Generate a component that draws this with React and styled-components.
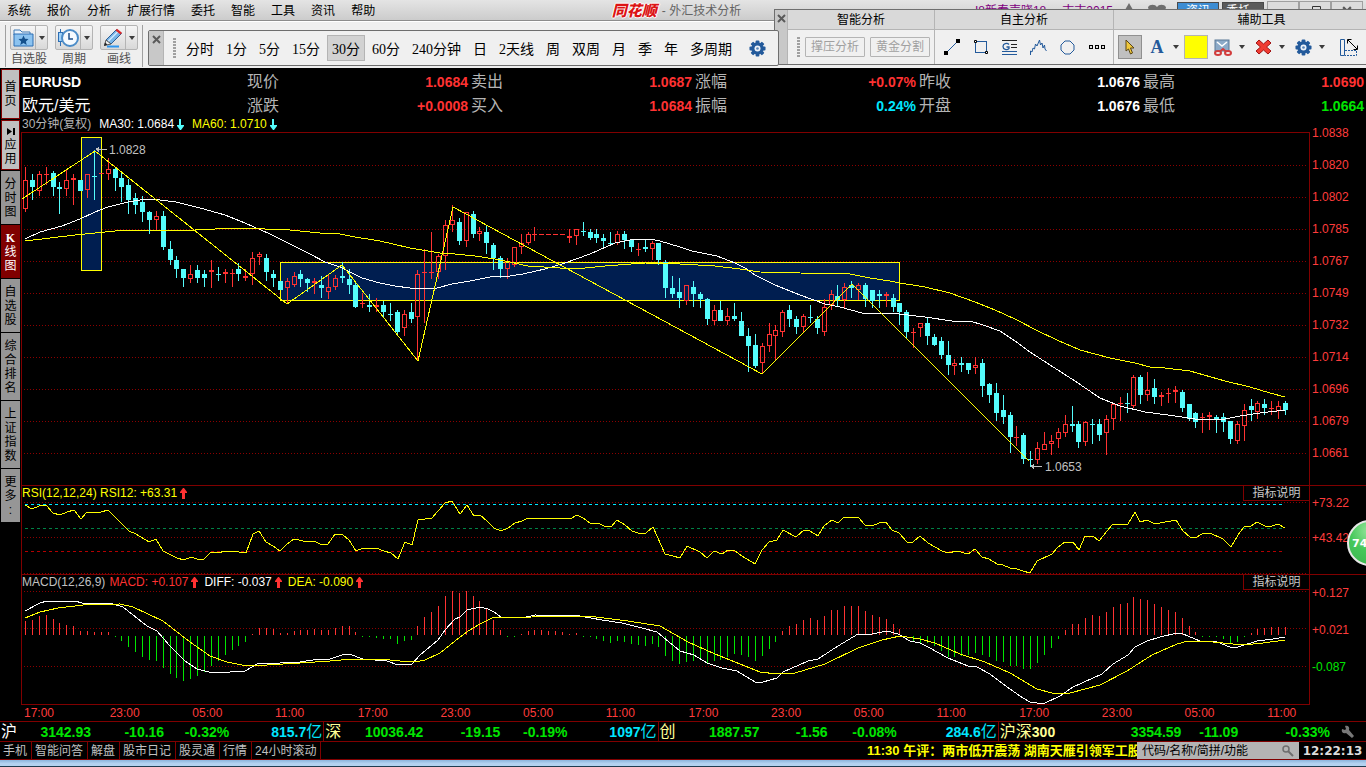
import React from "react";
import styled, { createGlobalStyle, css } from "styled-components";

const SANS = `"Liberation Sans", "Noto Sans CJK SC", sans-serif`;
const SERIF = `"Liberation Serif", "Noto Sans CJK SC", serif`;

const RED = "#ff3232";
const GREEN = "#00e600";
const CYAN = "#00e6ff";
const TEAL = "#54fcfc";
const LINE = "#800000";
const AXIS = "#ff3c3c";
const YELLOW = "#ffff00";

const GlobalStyle = createGlobalStyle`
	* {
		box-sizing: border-box;
	}
	body {
		margin: 0;
		background: #000;
		font-family: ${SANS};
		font-size: 12px;
	}
	button, input {
		margin: 0;
		padding: 0;
		border: 0;
		background: none;
		font: inherit;
		color: inherit;
	}
`;

/* ---------- data ---------- */

// [up, high, bodyTop, bodyBottom, low]
const CANDLES = [
	[1, 167, 180, 209, 212], [0, 174, 180, 187, 200], [1, 171, 174, 191, 196],
	[1, 167, 174, 174, 185], [0, 171, 173, 187, 196], [0, 182, 187, 189, 214],
	[1, 169, 180, 189, 196], [1, 174, 178, 180, 205], [0, 180, 180, 191, 191],
	[1, 174, 174, 190, 198], [0, 150, 176, 176, 200], [1, 173, 173, 173, 173],
	[1, 158, 169, 174, 180], [0, 167, 169, 178, 191], [0, 171, 178, 187, 202],
	[0, 179, 185, 200, 214], [0, 193, 198, 205, 214], [0, 196, 202, 212, 222],
	[0, 211, 212, 220, 234], [1, 211, 216, 220, 230], [0, 211, 216, 247, 250],
	[0, 241, 249, 260, 265], [0, 256, 260, 269, 278], [0, 269, 269, 278, 287],
	[1, 265, 274, 279, 283], [0, 265, 270, 278, 283], [0, 270, 274, 278, 287],
	[1, 260, 270, 272, 288], [0, 267, 274, 274, 281], [1, 269, 272, 274, 283],
	[1, 269, 273, 273, 287], [0, 263, 269, 274, 281], [1, 269, 276, 278, 281],
	[1, 252, 258, 274, 285], [1, 252, 254, 257, 265], [0, 254, 258, 272, 281],
	[0, 270, 274, 278, 287], [0, 281, 281, 290, 290], [1, 278, 281, 288, 303],
	[1, 272, 276, 285, 287], [0, 270, 274, 279, 287], [0, 278, 279, 283, 292],
	[1, 278, 281, 283, 294], [0, 276, 285, 288, 298], [1, 275, 287, 292, 299],
	[1, 275, 278, 287, 290], [0, 262, 276, 278, 283], [0, 269, 279, 285, 294],
	[0, 283, 285, 307, 308], [1, 293, 303, 303, 308], [0, 294, 305, 307, 312],
	[1, 298, 305, 307, 312], [0, 301, 305, 312, 318], [0, 303, 314, 314, 321],
	[0, 310, 312, 332, 336], [1, 310, 314, 328, 336], [0, 303, 312, 319, 323],
	[1, 270, 274, 317, 361], [1, 249, 272, 272, 323], [1, 232, 272, 272, 279],
	[1, 254, 256, 272, 279], [1, 220, 225, 256, 270], [1, 205, 220, 225, 232],
	[0, 218, 222, 241, 245], [1, 212, 212, 241, 247], [0, 211, 214, 234, 238],
	[1, 227, 231, 234, 241], [0, 226, 232, 243, 254], [0, 243, 245, 258, 270],
	[0, 256, 258, 269, 278], [1, 258, 261, 269, 279], [1, 247, 247, 265, 267],
	[1, 234, 243, 247, 254], [1, 232, 234, 243, 245], [1, 227, 234, 234, 241],
	[1, 234, 234, 234, 234], [1, 234, 234, 234, 234], [1, 234, 234, 234, 234],
	[1, 234, 234, 234, 234], [1, 229, 236, 238, 243], [1, 229, 229, 236, 245],
	[0, 222, 231, 231, 236], [0, 229, 232, 238, 240], [0, 229, 234, 238, 243],
	[0, 234, 238, 241, 249], [0, 232, 243, 243, 245], [1, 231, 234, 243, 245],
	[0, 231, 234, 240, 249], [0, 240, 240, 247, 252], [1, 243, 249, 249, 256],
	[0, 240, 247, 249, 252], [1, 241, 243, 249, 260], [0, 243, 243, 260, 265],
	[0, 260, 262, 288, 298], [0, 276, 288, 294, 298], [0, 278, 292, 298, 308],
	[1, 285, 285, 301, 305], [0, 281, 287, 294, 307], [0, 292, 294, 299, 308],
	[0, 298, 299, 319, 325], [1, 305, 310, 321, 325], [0, 301, 310, 321, 321],
	[1, 308, 316, 321, 325], [0, 303, 316, 319, 321], [0, 312, 321, 336, 336],
	[0, 328, 336, 346, 372], [0, 334, 345, 366, 368], [1, 343, 346, 363, 374],
	[1, 323, 334, 346, 352], [1, 325, 330, 336, 360], [1, 310, 312, 332, 337],
	[0, 305, 310, 319, 327], [0, 316, 319, 327, 334], [1, 314, 316, 327, 332],
	[0, 305, 317, 317, 323], [0, 316, 319, 328, 334], [1, 299, 307, 332, 336],
	[1, 290, 294, 305, 310], [0, 285, 296, 300, 307], [1, 283, 287, 300, 309],
	[0, 281, 285, 288, 298], [1, 283, 285, 290, 300], [0, 283, 285, 299, 307],
	[0, 290, 290, 301, 308], [0, 290, 294, 296, 308], [1, 292, 294, 296, 307],
	[0, 294, 298, 307, 312], [0, 303, 303, 312, 325], [0, 310, 312, 332, 339],
	[1, 328, 332, 332, 348], [1, 323, 323, 328, 337], [0, 318, 323, 336, 345],
	[0, 334, 337, 345, 346], [0, 337, 341, 355, 359], [0, 341, 355, 365, 375],
	[1, 359, 363, 366, 375], [0, 357, 363, 365, 372], [0, 363, 363, 370, 374],
	[1, 357, 365, 368, 374], [0, 359, 363, 386, 397], [0, 383, 384, 395, 403],
	[0, 383, 393, 413, 421], [0, 395, 410, 417, 424], [0, 412, 415, 437, 453],
	[1, 426, 437, 437, 446], [0, 433, 435, 459, 464], [0, 451, 459, 459, 467],
	[1, 442, 448, 460, 464], [1, 432, 444, 450, 450], [1, 435, 441, 444, 455],
	[1, 428, 432, 439, 448], [1, 415, 424, 433, 437], [0, 406, 424, 426, 432],
	[0, 421, 424, 442, 448], [1, 421, 422, 442, 446], [0, 419, 424, 424, 444],
	[0, 419, 424, 435, 441], [1, 415, 419, 433, 455], [1, 404, 404, 419, 430],
	[1, 397, 403, 403, 421], [0, 393, 403, 403, 413], [1, 375, 377, 406, 408],
	[0, 375, 377, 395, 404], [1, 372, 390, 395, 401], [0, 379, 388, 397, 404],
	[1, 392, 395, 397, 406], [1, 388, 393, 394, 403], [1, 386, 390, 392, 403],
	[0, 390, 392, 408, 412], [0, 404, 404, 419, 421], [0, 412, 413, 422, 428],
	[1, 413, 417, 418, 433], [1, 412, 415, 417, 430], [0, 415, 417, 419, 433],
	[0, 413, 417, 422, 432], [0, 421, 421, 439, 444], [1, 421, 424, 441, 444],
	[1, 404, 410, 426, 441], [0, 399, 406, 410, 421], [1, 401, 403, 412, 419],
	[0, 399, 404, 408, 415], [1, 401, 408, 409, 415], [1, 401, 406, 411, 419],
	[0, 401, 403, 410, 415],
];

const MA30 =
	"25,239 40,232 62,226 80,219 95,212 108,207 128,202 140,200 150,199 160,200 176,202 200,208 225,215 245,223 270,234 290,244 310,254 325,262 340,267 350,272 362,278 380,283 395,286 410,288 437,288 452,284 470,281 490,277 510,276 523,274 545,269 565,263 590,254 615,243 630,240 650,239 660,241 680,247 692,251 717,256 735,263 745,268 755,275 775,285 800,295 825,304 840,307 862,313 890,313 925,317 952,321 970,321 983,325 1000,331 1015,341 1030,352 1050,365 1075,381 1100,398 1120,406 1145,412 1175,416 1195,419 1225,419 1240,416 1260,413 1285,410";

const MA60 =
	"25,241 50,238 75,235 95,233 115,231 150,230 195,230 235,228 265,229 290,230 320,233 340,234 355,237 380,241 410,248 440,253 455,254 475,256 495,259 505,261 528,266 560,268 585,268 605,266 645,263 680,264 715,266 740,269 760,272 800,273 850,274 870,278 890,281 900,283 925,287 950,293 975,302 995,310 1015,319 1038,331 1057,340 1080,350 1110,358 1135,363 1150,367 1165,368 1190,371 1225,381 1250,387 1270,393 1285,397";

const ZIGZAG =
	"22,199 95,151 287,304 342,265 418,361 453,207 762,374 852,284 940,372 1029,461";

const RSI =
	"25,505 32,509 39,506 46,505 53,513 60,515 67,512 74,510 81,519 87,512 94,513 101,512 108,510 129,531 136,534 149,542 156,539 163,551 177,558 184,560 191,557 197,559 204,559 211,552 218,553 225,551 232,551 246,553 253,534 259,531 266,542 273,546 280,551 287,544 294,539 308,542 314,541 322,545 328,544 335,534 342,534 349,540 356,551 363,548 370,549 376,548 384,551 391,553 398,559 405,542 412,545 418,520 425,519 432,518 438,511 445,503 452,501 455,506 460,514 467,505 474,516 480,515 487,521 494,528 501,531 508,528 515,523 522,521 528,518 563,518 570,519 577,515 583,518 590,523 598,523 604,526 611,527 617,520 625,525 632,531 638,533 646,533 653,527 665,554 673,556 680,558 687,546 700,552 707,558 714,551 722,554 728,550 735,551 742,556 755,564 762,550 769,542 777,540 783,530 796,537 804,530 810,531 818,536 824,526 832,520 838,523 844,517 852,518 858,517 865,525 872,526 879,523 886,522 892,530 899,533 907,542 913,542 920,536 928,543 942,551 948,553 957,551 968,554 975,549 982,557 989,559 997,564 1003,565 1010,568 1017,569 1023,571 1030,573 1037,561 1052,554 1058,547 1065,542 1073,542 1079,550 1085,536 1093,536 1099,541 1107,531 1113,524 1128,524 1135,512 1140,522 1147,520 1155,524 1176,520 1183,531 1190,537 1195,538 1202,534 1210,533 1223,539 1231,547 1238,535 1244,527 1251,526 1257,522 1265,526 1272,526 1278,524 1285,528";

const MACD = [
	14, 15, 19, 20, 16, 12, 10, 9, 4, 4, 3, 3, 3, -1, -5, -11, -16, -21, -24, -25,
	-32, -38, -42, -45, -43, -40, -36, -30, -25, -19, -14, -10, -6, 1, 7, 7, 6, 2,
	2, 4, 5, 5, 6, 5, 5, 7, 9, 9, 3, -1, -1, -2, -3, -3, -8, -5, -4, 9, 18, 23,
	29, 39, 44, 42, 44, 39, 34, 27, 15, 5, -1, -1, 1, 4, 5, 5, 4, 4, 3, 1, 2, -1,
	-1, -3, -5, -7, -5, -6, -8, -9, -10, -8, -11, -20, -25, -28, -26, -25, -24,
	-27, -25, -24, -21, -18, -19, -21, -25, -20, -13, -6, 4, 9, 11, 15, 17, 15,
	19, 25, 25, 29, 29, 29, 24, 20, 18, 16, 11, 6, -1, -6, -7, -7, -10, -15, -21,
	-21, -20, -19, -17, -19, -21, -25, -26, -30, -30, -33, -33, -27, -19, -12, -3,
	5, 11, 11, 17, 20, 19, 23, 28, 31, 32, 38, 36, 35, 31, 28, 25, 23, 17, 9, 3,
	-1, -1, -1, -3, -7, -6, -1, 2, 6, 7, 8, 8, 8,
];

const DIFF =
	"25,611 40,603 47,601 75,601 82,603 113,604 123,607 147,626 157,631 170,646 185,661 197,669 209,672 230,672 245,671 259,663 280,663 300,662 313,660 330,659 342,655 349,654 363,659 387,661 398,665 412,664 420,655 438,640 445,630 455,619 460,617 467,610 480,607 488,609 494,612 501,617 522,618 535,615 580,616 602,620 622,623 642,628 657,632 680,651 694,655 707,663 722,668 737,671 755,682 763,682 777,678 783,672 808,661 818,659 838,646 858,634 872,634 887,631 898,634 910,641 920,643 928,647 948,658 968,666 977,667 990,674 1007,687 1023,698 1030,702 1037,703 1045,703 1060,696 1073,687 1102,674 1113,664 1128,655 1135,647 1147,641 1160,637 1177,633 1183,634 1200,641 1217,642 1230,647 1238,647 1257,641 1273,639 1285,637";

const DEA =
	"25,618 40,612 58,608 83,605 120,604 133,607 163,621 190,642 210,656 227,662 247,666 267,665 300,663 330,661 353,659 380,659 400,661 415,662 425,660 440,653 455,641 468,631 480,624 492,618 532,617 555,616 588,616 628,621 660,626 688,642 715,654 735,662 760,672 777,674 795,673 825,664 858,648 882,640 900,636 920,639 935,643 960,654 985,662 1010,673 1037,689 1052,693 1070,693 1100,685 1127,671 1152,655 1177,644 1188,641 1213,642 1243,645 1263,643 1285,640";

const MENU = ["系统", "报价", "分析", "扩展行情", "委托", "智能", "工具", "资讯", "帮助"];

const PERIODS = ["分时", "1分", "5分", "15分", "30分", "60分", "240分钟", "日", "2天线", "周", "双周", "月", "季", "年", "多周期"];

const SIDE_TABS = [
	{ text: "首页", kind: "light" },
	{ text: "应用", kind: "light", icon: true },
	{ text: "分时图" },
	{ text: "K线图", kind: "active" },
	{ text: "自选股" },
	{ text: "综合排名" },
	{ text: "上证指数" },
	{ text: "更多", dots: true },
];

const QUOTES = [
	[["现价", "1.0684", RED], ["卖出", "1.0687", RED], ["涨幅", "+0.07%", RED], ["昨收", "1.0676", "#fff"], ["最高", "1.0690", RED]],
	[["涨跌", "+0.0008", RED], ["买入", "1.0684", RED], ["振幅", "0.24%", CYAN], ["开盘", "1.0676", "#fff"], ["最低", "1.0664", GREEN]],
];

const PRICES = ["1.0838", "1.0820", "1.0802", "1.0785", "1.0767", "1.0749", "1.0732", "1.0714", "1.0696", "1.0679", "1.0661"];

const TIMES = ["17:00", "23:00", "05:00", "11:00", "17:00", "23:00", "05:00", "11:00", "17:00", "23:00", "05:00", "11:00", "17:00", "23:00", "05:00", "11:00"];

const INDEXES = [
	{ name: "沪", color: "#fff", cols: "91fr 73fr 65fr 94fr", grow: 324, values: ["3142.93", "-10.16", "-0.32%"], amount: "815.7" },
	{ name: "深", color: "#ffff96", cols: "99fr 77fr 67fr 90fr", grow: 334, values: ["10036.42", "-19.15", "-0.19%"], amount: "1097" },
	{ name: "创", color: "#ffff96", cols: "101fr 68fr 69fr 101fr", grow: 340, values: ["1887.57", "-1.56", "-0.08%"], amount: "284.6" },
	{ name: "沪深", code: "300", color: "#ffff96", cols: "183fr 57fr 92fr 36fr", grow: 368, values: ["3354.59", "-11.09", "-0.33%"] },
];

const LINKS = ["手机", "智能问答", "解盘", "股市日记", "股灵通", "行情", "24小时滚动"];

/* ---------- frame ---------- */

const Shell = styled.div`
	position: relative;
	min-height: 100vh;
	display: flex;
	flex-direction: column;
	overflow: hidden;
`;

const TitleBar = styled.header`
	display: grid;
	grid-template-columns: minmax(0, 609fr) auto minmax(0, 622fr);
	align-items: center;
	height: 21px;
	background: linear-gradient(#e4e4e4, #cccccc);
	border-bottom: 1px solid #8c8c8c;
`;

const Menu = styled.nav`
	display: flex;
	gap: 16px;
	padding-left: 7px;
	line-height: 20px;
	white-space: nowrap;
`;

const Caption = styled.div`
	display: flex;
	align-items: center;
	gap: 5px;
	color: #646464;
	line-height: 22px;
`;

const Brand = styled.strong`
	color: #dc1414;
	font-size: 15px;
	font-weight: 900;
	font-style: italic;
	line-height: 20px;
	text-shadow: 1px 0 #fff, -1px 0 #fff, 0 1px #fff, 0 -1px #fff;
`;

const TitleRight = styled.div`
	display: flex;
	align-items: center;
	justify-content: flex-end;
	gap: 3px;
	height: 20px;
	overflow: hidden;
	white-space: nowrap;
`;

const UserName = styled.span`
	color: #800080;
	line-height: 22px;
	margin-right: 13px;
	& + & {
		margin-right: 6px;
	}
`;

const TitleButton = styled.button`
	width: 42px;
	height: 18px;
	color: #fff;
	line-height: 16px;
	border: 1px solid #4a4a4a;
	background: ${({ $blue }) => ($blue ? "#3c8cd2" : "#5a5a5a")};
`;

const WindowButton = styled.button`
	display: flex;
	justify-content: center;
	align-items: center;
	width: 32px;
	height: 20px;
	margin-left: -3px;
	border: 1px solid #a0a0a0;
	background: #dcdcdc;
`;

const ToolBar = styled.div`
	display: flex;
	height: 47px;
	padding: 3px 0 1px 5px;
	background: #efefef;
	border-top: 1px solid #fff;
`;

const MainTools = styled.div`
	display: flex;
	gap: 7px;
	padding: 0 4px;
	border-left: 1px solid #a0a0a0;
	border-right: 1px solid #a0a0a0;
`;

const MainTool = styled.div`
	width: 38px;
	color: #505050;
	text-align: center;
	line-height: 18px;
`;

const SplitButton = styled.div`
	display: flex;
	height: 25px;
	border: 1px solid #b4b4b4;
	border-radius: 2px;
	background: linear-gradient(#f6f6f6, #d8d8d8);
`;

const IconButton = styled.button`
	display: flex;
	flex: none;
	align-self: center;
	justify-content: center;
	align-items: center;
	width: ${({ $w = 24 }) => $w}px;
	height: ${({ $h = 24 }) => $h}px;
	${({ $pressed }) =>
		$pressed &&
		css`
			background: #c0c0c0;
			border: 1px solid #909090;
		`}
`;

const CaretButton = styled.button`
	display: flex;
	justify-content: center;
	align-items: center;
	width: 12px;
	border-left: ${({ $line }) => ($line ? "1px solid #b4b4b4" : "0")};
	&::after {
		content: "";
		border: 3px solid transparent;
		border-top: 4px solid #3c3c3c;
		border-bottom: 0;
	}
`;

const Floating = styled.section`
	position: absolute;
	display: flex;
	background: #f0f0f0;
	border: 1px solid #6e6e6e;
`;

const PeriodBar = styled(Floating)`
	top: 30px;
	left: 148px;
	height: 36px;
	z-index: 2;
	border-radius: 2px;
`;

const DrawBar = styled(Floating)`
	top: 9px;
	left: 774px;
	right: 0;
	height: 56px;
	z-index: 1;
	border-right: 0;
	overflow: hidden;
`;

const Handle = styled.div`
	flex: none;
	width: ${({ $w }) => $w}px;
	background: #c8c8c8;
	border-right: 1px solid #b4b4b4;
`;

const CloseButton = styled.button`
	display: block;
	width: 100%;
	height: 18px;
	color: #505050;
`;

const Grip = styled.i`
	align-self: center;
	width: 3px;
	height: 20px;
	margin-left: 9px;
	background: repeating-linear-gradient(#a0a0a0 0 2px, transparent 2px 3px);
`;

const Periods = styled.div`
	display: flex;
	align-items: center;
	gap: 2px;
	padding-left: 5px;
	font-family: ${SERIF};
	font-size: 14px;
`;

const Period = styled.button`
	height: 26px;
	padding: 0 5px;
	white-space: nowrap;
	${({ $active }) =>
		$active &&
		css`
			background: #d2d2d2;
			box-shadow: inset 0 0 0 1px #b4b4b4;
		`}
`;

const DrawGroup = styled.div`
	flex: none;
	width: ${({ $w }) => $w}px;
	border-right: 1px solid #b4b4b4;
`;

const DrawTitle = styled.h2`
	margin: 0;
	height: 20px;
	font-size: 12px;
	font-weight: 400;
	line-height: 20px;
	text-align: center;
	background: #d9d9d9;
	border-bottom: 1px solid #b4b4b4;
`;

const DrawTools = styled.div`
	display: flex;
	align-items: center;
	gap: ${({ $gap = 0 }) => $gap}px;
	height: 34px;
	padding-left: ${({ $pad = 0 }) => $pad}px;
`;

const DisabledButton = styled.button`
	height: 20px;
	padding: 0 5px;
	color: #a0a0a0;
	line-height: 18px;
	white-space: nowrap;
	border: 1px solid #b4b4b4;
	border-radius: 1px;
`;

const Swatch = styled.button`
	flex: none;
	width: 24px;
	height: 24px;
	background: ${YELLOW};
	border: 1px solid #b4b4b4;
`;

const ToolPair = styled.div`
	display: flex;
	flex: none;
`;

const Body = styled.div`
	display: flex;
`;

const Sidebar = styled.nav`
	flex: none;
	display: flex;
	flex-direction: column;
	gap: 1px;
	width: 21px;
	padding: 1px 0 0 1px;
`;

const SideTab = styled.button`
	width: 19px;
	padding: 6px 3px 5px;
	background: #969696;
	color: #000;
	line-height: 14px;
	text-align: center;
	word-break: break-all;
	${({ $kind }) =>
		$kind === "light" &&
		css`
			min-height: 50px;
			background: #c0c0c0;
			border: 1px solid ${LINE};
			padding: 2px;
		`}
	${({ $kind }) =>
		$kind === "active" &&
		css`
			background: ${LINE};
			color: #fff;
			font-family: ${SERIF};
			&::first-letter {
				font-weight: 700;
			}
		`}
`;

const Dots = styled.span`
	display: block;
	height: 14px;
`;

const Main = styled.main`
	flex: 1;
	min-width: 0;
	padding-top: 1px;
`;

/* ---------- quotes ---------- */

const QuoteRow = styled.div`
	display: grid;
	grid-template-columns: repeat(6, minmax(0, 1fr));
	height: 24px;
	line-height: 26px;
	padding-left: 1px;
`;

const QuoteName = styled.h1`
	margin: 0;
	color: #fff;
	font-size: ${({ $code }) => ($code ? 14 : 16)}px;
	font-weight: ${({ $code }) => ($code ? 700 : 400)};
	line-height: 26px;
`;

const Quote = styled.div`
	display: flex;
	justify-content: space-between;
	padding-right: 2px;
	padding-left: 1px;
	font-size: 16px;
	color: #b4b4b4;
`;

const Num = styled.b`
	font-size: 14px;
	color: ${({ $color }) => $color};
`;

const Legend = styled.div`
	display: flex;
	align-items: center;
	gap: 8px;
	height: 15px;
	padding-left: 1px;
	line-height: 15px;
	color: #b4b4b4;
	white-space: nowrap;
`;

const LegendItem = styled.span`
	display: inline-flex;
	align-items: center;
	gap: 3px;
	color: ${({ $color = "#c0c0c0" }) => $color};
`;

/* ---------- charts ---------- */

const Panel = styled.section`
	display: flex;
	border-top: ${({ $line }) => ($line ? `1px solid ${LINE}` : "0")};
`;

const Plot = styled.div`
	flex: 1;
	min-width: 0;
	border-left: 1px solid ${LINE};
	border-top: ${({ $top }) => ($top ? `1px solid ${LINE}` : "0")};
	border-bottom: ${({ $bottom }) => ($bottom ? `1px solid ${LINE}` : "0")};
`;

const PlotHead = styled.div`
	display: flex;
	justify-content: space-between;
	height: 15px;
	${Legend} {
		padding-left: 0;
		gap: 4px;
	}
	${LegendItem} + ${LegendItem} {
		margin-right: 2px;
	}
`;

const HelpButton = styled.button`
	width: 66px;
	height: 15px;
	color: #c8c8c8;
	line-height: 14px;
	border-left: 1px solid ${LINE};
	border-bottom: 1px solid ${LINE};
`;

const Drawing = styled.svg`
	display: block;
	width: 100%;
	height: ${({ $h }) => $h}px;
	shape-rendering: crispEdges;
`;

const Axis = styled.div`
	flex: none;
	width: 57px;
	padding-left: 2px;
	border-left: 1px solid ${LINE};
	color: ${AXIS};
	line-height: ${({ $step }) => $step}px;
`;

const AxisLabel = styled.div`
	color: ${({ $color }) => $color};
`;

const PriceLabels = styled.div`
	margin-top: -15px;
`;

const TimeAxis = styled.div`
	display: grid;
	grid-template-columns: 86fr repeat(14, 83fr) 42fr;
	height: 16px;
	padding-left: 3px;
	margin-right: 57px;
	color: ${AXIS};
	line-height: 16px;
`;

const Ball = styled.button`
	position: absolute;
	top: 520px;
	right: -27px;
	z-index: 3;
	width: 46px;
	height: 46px;
	padding-left: 3px;
	border: 2px solid #e8e8e8;
	border-radius: 50%;
	background: radial-gradient(circle at 50% 20%, #9be6a0, #46c85a 50%, #3cb450);
	color: #fff;
	font-family: "DejaVu Sans", sans-serif;
	font-size: 11px;
	font-weight: 700;
	text-align: left;
`;

/* ---------- footer ---------- */

const IndexBar = styled.div`
	display: flex;
	height: 20px;
	border-top: 1px solid ${LINE};
	line-height: 20px;
`;

const IndexCell = styled.div`
	flex: ${({ $grow }) => $grow} 1 0;
	min-width: 0;
	display: grid;
	grid-template-columns: ${({ $cols }) => $cols};
	text-align: right;
	font-size: 16px;
	white-space: nowrap;
	border-right: 1px solid ${LINE};
	&:last-child {
		border-right: 0;
	}
`;

const IndexHead = styled.div`
	display: flex;
	justify-content: space-between;
	padding-left: 1px;
`;

const IndexName = styled.span`
	color: ${({ $color }) => $color};
`;

const Amount = styled.span`
	color: ${CYAN};
	padding-right: 1px;
`;

const BottomBar = styled.footer`
	display: flex;
	height: 19px;
	line-height: 18px;
	white-space: nowrap;
	border-top: 1px solid ${LINE};
	border-bottom: 1px solid ${LINE};
`;

const BottomLink = styled.a`
	padding: 0 4px 0 3px;
	color: #c0c0c0;
	text-decoration: none;
	border-right: 1px solid ${LINE};
`;

const News = styled.p`
	margin: 0 0 0 auto;
	width: 270px;
	overflow: hidden;
	color: ${YELLOW};
	font-size: 13px;
	font-weight: 700;
`;

const Search = styled.label`
	display: flex;
	align-items: center;
	width: 162px;
	padding: 0 5px;
	background: #b4b4b4;
	input {
		flex: 1;
		min-width: 0;
		outline: none;
	}
	input::placeholder {
		color: #000;
		opacity: 1;
	}
`;

const Clock = styled.time`
	width: 67px;
	color: #dcdcdc;
	font-family: "DejaVu Sans", sans-serif;
	font-weight: 700;
	text-align: center;
`;

const Taskbar = styled.div`
	flex: 1;
	min-height: 7px;
	background: linear-gradient(#8cb4dc, #b4d2f0 60%);
	border-bottom: 1px solid #1e3c50;
`;

/* ---------- icons ---------- */

function Arrow({ up, color }) {
	return (
		<svg width="7" height="11" viewBox="0 0 7 11" fill={color}>
			{up ? <path d="M3 0h1l3 4v1H5v6H2V5H0V4z" /> : <path d="M2 0h2v6h3v1L4 11H3L0 7V6h2z" />}
		</svg>
	);
}

function Gear({ size = 17 }) {
	return (
		<svg width={size} height={size} viewBox="-9 -9 18 18">
			{[0, 45, 90, 135].map((a) => (
				<rect key={a} x="-2" y="-8.5" width="4" height="17" rx="1" fill="#235a9b" transform={`rotate(${a})`} />
			))}
			<circle r="6.5" fill="#235a9b" />
			<circle r="3.2" fill="#eef3fa" />
			<circle r="1.4" fill="#5b87b8" />
		</svg>
	);
}

function Cross({ size = 9 }) {
	return (
		<svg width={size} height={size} viewBox="0 0 9 9" stroke="#5a5a5a" strokeWidth="2">
			<path d="M1 1l7 7M8 1L1 8" />
		</svg>
	);
}

const icons = {
	folder: (
		<svg width="21" height="19" viewBox="0 0 21 19">
			<path d="M1 2h6l2 2h8v3H1z" fill="#e8f2fc" stroke="#3c78b4" />
			<path d="M1 6h19v12H1z" fill="#8cc3f0" stroke="#2d6eb4" />
			<path d="M10.500 7.500l1.500 3.200 3.500.4-2.600 2.300.8 3.500-3.200-1.800-3.200 1.800.8-3.500-2.600-2.300 3.500-.4z" fill="#14508c" />
		</svg>
	),
	clock: (
		<svg width="22" height="20" viewBox="0 0 22 20">
			<path d="M3.500 1v17" stroke="#2d6eb4" />
			<rect x="1.500" y="4.500" width="4" height="9" fill="#a0d2fa" stroke="#2d6eb4" />
			<circle cx="13" cy="10" r="8" fill="#f5faff" stroke="#4b8cc8" strokeWidth="2" />
			<path d="M12 5v6h4" fill="none" stroke="#1e508c" strokeWidth="1.500" />
		</svg>
	),
	pencil: (
		<svg width="20" height="20" viewBox="0 0 20 20">
			<path d="M4 18.500h12" stroke="#2d96f0" strokeWidth="2" />
			<path d="M3 12L13.500 1.500l5 4L8 16z" fill="#78b4e6" stroke="#2d5f96" />
			<path d="M5 13.500L15.500 3" stroke="#d2ebff" strokeWidth="1.500" />
			<path d="M12.500 2.500L14 .8l5 4-1.500 1.700z" fill="#dc2828" />
			<path d="M1.500 17.500L3 12l5 4z" fill="#f0f0f0" stroke="#555" />
			<path d="M1 18l1-3.500 2.500 2z" fill="#222" />
		</svg>
	),
	line: (
		<svg width="16" height="16" viewBox="0 0 16 16">
			<path d="M2 14L14 2" stroke="#235a9b" />
			<path d="M0 12h4v4H0zM12 0h4v4h-4z" fill="#000" />
		</svg>
	),
	rect: (
		<svg width="16" height="16" viewBox="0 0 16 16">
			<rect x="2.500" y="2.500" width="11" height="11" fill="none" stroke="#235a9b" />
			<path d="M1.500 1.500h2v2h-2zM12.500 12.500h2v2h-2z" fill="#fff" stroke="#000" />
		</svg>
	),
	golden: (
		<svg width="16" height="15" viewBox="0 0 16 15" fill="none">
			<path d="M0 .5h15M9 4.500h6M9 7.500h6" stroke="#222" />
			<path d="M0 11.500h15M0 14.500h15" stroke="#235a9b" />
			<path d="M7 4.500C5 2.500 1 3.500 1 6.500s4 4 6 2V7H4.500" stroke="#235a9b" strokeWidth="1.300" />
		</svg>
	),
	wave: (
		<svg width="17" height="16" viewBox="0 0 17 16" fill="none" stroke="#235a9b">
			<path d="M.5 16v-4l1.500 1 1-4 1.500 1 1-5 1.500 2L9.500 1l1 5 1.500-2 1 5 1.500-3 .5 4 1.500 2" />
		</svg>
	),
	circle: (
		<svg width="15" height="15" viewBox="0 0 15 15" fill="none" stroke="#235a9b">
			<path d="M5 1h5l4 4v5l-4 4H5l-4-4V5z" />
		</svg>
	),
	dots: (
		<svg width="16" height="4" viewBox="0 0 16 4" fill="#000">
			<path d="M0 0h4v4H0zM6 0h4v4H6zM12 0h4v4h-4z" />
			<path d="M1 1h2v2H1zM7 1h2v2H7zM13 1h2v2h-2z" fill="#e0e0e0" />
		</svg>
	),
	pointer: (
		<svg width="12" height="16" viewBox="0 0 12 16">
			<path d="M2 1l8 8H6.500l2 5-2 1-2-5L2 12z" fill="#f0c83c" stroke="#5a4614" />
		</svg>
	),
	cut: (
		<svg width="18" height="17" viewBox="0 0 18 17">
			<rect x="1" y="1" width="14" height="11" fill="#8caac8" stroke="#5a7896" />
			<path d="M3 3l5 4 5-4" fill="none" stroke="#fff" strokeWidth="1.500" />
			<g fill="none" stroke="#d23c3c" strokeWidth="2">
				<ellipse cx="4" cy="14" rx="3" ry="2" />
				<ellipse cx="14" cy="14" rx="3" ry="2" />
				<path d="M6 12.500l3-2.500 3 2.500" />
			</g>
		</svg>
	),
	remove: (
		<svg width="17" height="16" viewBox="0 0 17 16">
			<path d="M4 1l4.500 4L13 1l3 3-4.500 4 4.500 4-3 3-4.500-4L4 15l-3-3 4.500-4L1 4z" fill="#f03c32" stroke="#a01414" />
		</svg>
	),
	dock: (
		<svg width="20" height="19" viewBox="0 0 20 19" fill="none">
			<path d="M1.500 1.500h4v16h-4z" stroke="#235a9b" />
			<path d="M6 12.500h11.500v5H6" stroke="#235a9b" strokeDasharray="2 1" />
			<path d="M9 2l9 9M8.500 5.500v-4h4M18.500 7.500v4h-4" stroke="#000" />
		</svg>
	),
	letter: (
		<svg width="18" height="20" viewBox="0 0 18 20">
			<text x="9" y="16" textAnchor="middle" fontFamily="Liberation Serif" fontWeight="700" fontSize="18" fill="#235a9b">
				A
			</text>
		</svg>
	),
};

/* ---------- chart parts ---------- */

const candleX = (i) => Math.round(25 + i * 6.885);

function Dotted({ ys }) {
	return ys.map((y) => (
		<line key={y} x1="24" x2="1307" y1={y + 0.5} y2={y + 0.5} stroke="#8c0000" strokeDasharray="1 2" />
	));
}

function Candle({ index, data: [up, high, top, bottom, low] }) {
	const x = candleX(index);
	const flat = bottom - top < 3;
	const color = up ? RED : TEAL;
	if (flat || !up) {
		return (
			<g fill={color}>
				<rect x={x} y={high} width="1" height={low - high} />
				<rect x={x - 2} y={top} width="5" height={Math.max(1, bottom - top)} />
			</g>
		);
	}
	return (
		<g fill={color}>
			<rect x={x} y={high} width="1" height={top - high} />
			<rect x={x} y={bottom} width="1" height={low - bottom} />
			<rect x={x - 1.5} y={top + 0.5} width="4" height={bottom - top - 1} fill="none" stroke={color} />
		</g>
	);
}

function PriceChart() {
	return (
		<Drawing $h={352} viewBox="22 133 1287 352" preserveAspectRatio="none">
			<Dotted ys={[165, 197, 229, 261, 293, 325, 357, 389, 421, 453]} />
			<g fill="#001e50" stroke={YELLOW}>
				<rect x="81.5" y="137.5" width="20" height="133" />
				<rect x="280.5" y="262.5" width="619" height="38" />
			</g>
			{CANDLES.map((c, i) => (
				<Candle key={i} index={i} data={c} />
			))}
			<g fill="none">
				<polyline points={MA30} stroke="#fff" />
				<polyline points={MA60} stroke={YELLOW} />
				<polyline points={ZIGZAG} stroke={YELLOW} />
			</g>
			<g fill="#c0c0c0" fontFamily="Liberation Sans" fontSize="12">
				<path d="M95 149l4-2v2h8v1h-8v2z" />
				<text x="109" y="154">1.0828</text>
				<path d="M1030 466l4-2v2h8v1h-8v2z" />
				<text x="1045" y="471">1.0653</text>
			</g>
		</Drawing>
	);
}

function RsiChart() {
	return (
		<Drawing $h={73} viewBox="22 501 1287 73" preserveAspectRatio="none">
			<Dotted ys={[502, 537, 573]} />
			<g strokeDasharray="3 3">
				<line x1="25" x2="1283" y1="504.5" y2="504.5" stroke={CYAN} />
				<line x1="25" x2="1283" y1="528.5" y2="528.5" stroke="#008246" />
				<line x1="25" x2="1283" y1="551.5" y2="551.5" stroke="#b40000" />
			</g>
			<polyline points={RSI} fill="none" stroke={YELLOW} />
		</Drawing>
	);
}

function MacdChart() {
	return (
		<Drawing $h={114} viewBox="22 590 1287 114" preserveAspectRatio="none">
			<Dotted ys={[591, 628, 666]} />
			{MACD.map((v, i) => (
				<rect
					key={i}
					x={candleX(i)}
					y={v > 0 ? 635 - v : 636}
					width="1"
					height={Math.abs(v)}
					fill={v > 0 ? RED : GREEN}
				/>
			))}
			<polyline points={DIFF} fill="none" stroke="#fff" />
			<polyline points={DEA} fill="none" stroke={YELLOW} />
		</Drawing>
	);
}

/* ---------- page parts ---------- */

function Header() {
	return (
		<TitleBar>
			<Menu>
				{MENU.map((m) => (
					<button key={m}>{m}</button>
				))}
			</Menu>
			<Caption>
				<Brand>同花顺</Brand>
				<span>- 外汇技术分析</span>
			</Caption>
			<TitleRight>
				<UserName>I8新春声晓18</UserName>
				<UserName>古古2015</UserName>
				<svg width="52" height="16" viewBox="0 0 52 16" fill="#6e6e6e">
					<path d="M7 0l4 7a4 4 0 1 1-8 0z" />
					<path d="M26 4a5 4 0 0 1 9 0 5 4 0 0 1 9 0q0 5-9 11-9-6-9-11z" />
				</svg>
				<TitleButton $blue>资讯</TitleButton>
				<TitleButton>委托 ▾</TitleButton>
				<span />
				<WindowButton aria-label="最小化">
					<svg width="10" height="10" stroke="#333" strokeWidth="2"><path d="M0 8h10" /></svg>
				</WindowButton>
				<WindowButton aria-label="还原">
					<svg width="12" height="10" fill="none" stroke="#333"><path d="M3.500 3V.5h8v6H9M.5 3.500h8v6h-8z" /></svg>
				</WindowButton>
				<WindowButton aria-label="关闭">
					<Cross size={10} />
				</WindowButton>
				<span />
			</TitleRight>
		</TitleBar>
	);
}

function Tool({ icon, label }) {
	return (
		<MainTool>
			<SplitButton>
				<IconButton aria-label={label}>{icons[icon]}</IconButton>
				<CaretButton $line aria-label={`${label}菜单`} />
			</SplitButton>
			{label}
		</MainTool>
	);
}

function DrawPair({ label, children }) {
	return (
		<ToolPair>
			<IconButton $w={26} aria-label={label}>{children}</IconButton>
			<CaretButton aria-label={`${label}选项`} />
		</ToolPair>
	);
}

function FloatingBars() {
	return (
		<>
			<PeriodBar>
				<Handle $w={15}>
					<CloseButton aria-label="关闭"><Cross /></CloseButton>
				</Handle>
				<Grip />
				<Periods>
					{PERIODS.map((p) => (
						<Period key={p} $active={p === "30分"}>{p}</Period>
					))}
				</Periods>
				<IconButton $w={41} aria-label="周期设置"><Gear /></IconButton>
			</PeriodBar>
			<DrawBar>
				<Handle $w={13}>
					<CloseButton aria-label="关闭"><Cross /></CloseButton>
				</Handle>
				<DrawGroup $w={147}>
					<DrawTitle>智能分析</DrawTitle>
					<DrawTools $gap={5}>
						<Grip />
						<DisabledButton disabled>撑压分析</DisabledButton>
						<DisabledButton disabled>黄金分割</DisabledButton>
					</DrawTools>
				</DrawGroup>
				<DrawGroup $w={179}>
					<DrawTitle>自主分析</DrawTitle>
					<DrawTools $pad={2}>
						{["line", "rect", "golden", "wave", "circle", "dots"].map((n) => (
							<IconButton key={n} $w={29} aria-label={n}>{icons[n]}</IconButton>
						))}
					</DrawTools>
				</DrawGroup>
				<DrawGroup $w={296}>
					<DrawTitle>辅助工具</DrawTitle>
					<DrawTools $gap={2} $pad={4}>
						<IconButton $pressed aria-label="选择">{icons.pointer}</IconButton>
						<DrawPair label="文字">{icons.letter}</DrawPair>
						<Swatch aria-label="颜色" />
						<DrawPair label="剪切">{icons.cut}</DrawPair>
						<DrawPair label="删除">{icons.remove}</DrawPair>
						<DrawPair label="设置"><Gear /></DrawPair>
						<IconButton $w={38} aria-label="停靠">{icons.dock}</IconButton>
					</DrawTools>
				</DrawGroup>
			</DrawBar>
		</>
	);
}

function QuoteBoard() {
	return (
		<>
			{QUOTES.map((row, i) => (
				<QuoteRow key={i}>
					<QuoteName as={i ? "h2" : "h1"} $code={i === 0}>{i ? "欧元/美元" : "EURUSD"}</QuoteName>
					{row.map(([label, value, color]) => (
						<Quote key={label}>
							{label}
							<Num $color={color}>{value}</Num>
						</Quote>
					))}
				</QuoteRow>
			))}
		</>
	);
}

export default function App() {
	return (
		<Shell>
			<GlobalStyle />
			<Header />
			<ToolBar>
				<MainTools>
					<Tool icon="folder" label="自选股" />
					<Tool icon="clock" label="周期" />
					<Tool icon="pencil" label="画线" />
				</MainTools>
			</ToolBar>
			<FloatingBars />

			<Body>
				<Sidebar>
					{SIDE_TABS.map((t) => (
						<SideTab key={t.text} $kind={t.kind}>
							{t.icon && (
								<svg width="8" height="7" viewBox="0 0 8 7"><path d="M0 0l5 3.500L0 7zM6 0h2v7H6z" /></svg>
							)}
							{t.text}
							{t.dots && <Dots>:</Dots>}
						</SideTab>
					))}
				</Sidebar>
				<Main>
					<QuoteBoard />
					<Legend>
						<span>30分钟(复权)</span>
						<LegendItem $color="#fff">MA30: 1.0684<Arrow color={TEAL} /></LegendItem>
						<LegendItem $color={YELLOW}>MA60: 1.0710<Arrow color={TEAL} /></LegendItem>
					</Legend>

					<Panel>
						<Plot $top>
							<PriceChart />
						</Plot>
						<Axis $step={32}>
							<PriceLabels>
								{PRICES.map((p) => (
									<AxisLabel key={p}>{p}</AxisLabel>
								))}
							</PriceLabels>
						</Axis>
					</Panel>

					<Panel $line>
						<Plot>
							<PlotHead>
								<Legend>
									<LegendItem $color={YELLOW}>RSI(12,12,24) RSI12: +63.31<Arrow up color={RED} /></LegendItem>
								</Legend>
								<HelpButton>指标说明</HelpButton>
							</PlotHead>
							<RsiChart />
						</Plot>
						<Axis $step={35}>
							<AxisLabel>+73.22</AxisLabel>
							<AxisLabel>+43.42</AxisLabel>
						</Axis>
					</Panel>

					<Panel $line>
						<Plot $bottom>
							<PlotHead>
								<Legend>
									<LegendItem>MACD(12,26,9)</LegendItem>
									<LegendItem $color={RED}>MACD: +0.107<Arrow up color={RED} /></LegendItem>
									<LegendItem $color="#fff">DIFF: -0.037<Arrow up color={RED} /></LegendItem>
									<LegendItem $color={YELLOW}>DEA: -0.090<Arrow up color={RED} /></LegendItem>
								</Legend>
								<HelpButton>指标说明</HelpButton>
							</PlotHead>
							<MacdChart />
						</Plot>
						<Axis $step={37}>
							<AxisLabel>+0.127</AxisLabel>
							<AxisLabel>+0.021</AxisLabel>
							<AxisLabel $color={GREEN}>-0.087</AxisLabel>
						</Axis>
					</Panel>

					<TimeAxis>
						{TIMES.map((t, i) => (
							<span key={i}>{t}</span>
						))}
					</TimeAxis>
				</Main>
			</Body>
			<Ball>74</Ball>

			<IndexBar>
				{INDEXES.map((x) => (
					<IndexCell key={x.name} $cols={x.cols} $grow={x.grow}>
						<IndexHead>
							<IndexName $color={x.color}>
								{x.name}
								{x.code && <Num>{x.code}</Num>}
							</IndexName>
							<Num $color={GREEN}>{x.values[0]}</Num>
						</IndexHead>
						<Num $color={GREEN}>{x.values[1]}</Num>
						<Num $color={GREEN}>{x.values[2]}</Num>
						{x.amount ? (
							<Amount><Num>{x.amount}</Num>亿</Amount>
						) : (
							<IconButton $w={36} $h={18} aria-label="设置">
								<svg width="14" height="14" viewBox="0 0 14 14">
									<path d="M1 4l3 1 1-1-1-3c3-1 5 1 4 4l5 6-2 2-6-5C2 9 0 7 1 4z" fill="#787878" />
								</svg>
							</IconButton>
						)}
					</IndexCell>
				))}
			</IndexBar>

			<BottomBar>
				{LINKS.map((l) => (
					<BottomLink key={l} href="#">{l}</BottomLink>
				))}
				<News>11:30 午评：两市低开震荡 湖南天雁引领军工股</News>
				<Search>
					<input type="text" aria-label="搜索" placeholder="代码/名称/简拼/功能" />
					<svg width="12" height="12" viewBox="0 0 12 12" fill="none" stroke="#6e6e6e">
						<circle cx="4" cy="4" r="3" strokeWidth="1.500" />
						<path d="M6 6l5 5" strokeWidth="2" />
					</svg>
				</Search>
				<Clock>12:22:13</Clock>
			</BottomBar>
			<Taskbar />
		</Shell>
	);
}
